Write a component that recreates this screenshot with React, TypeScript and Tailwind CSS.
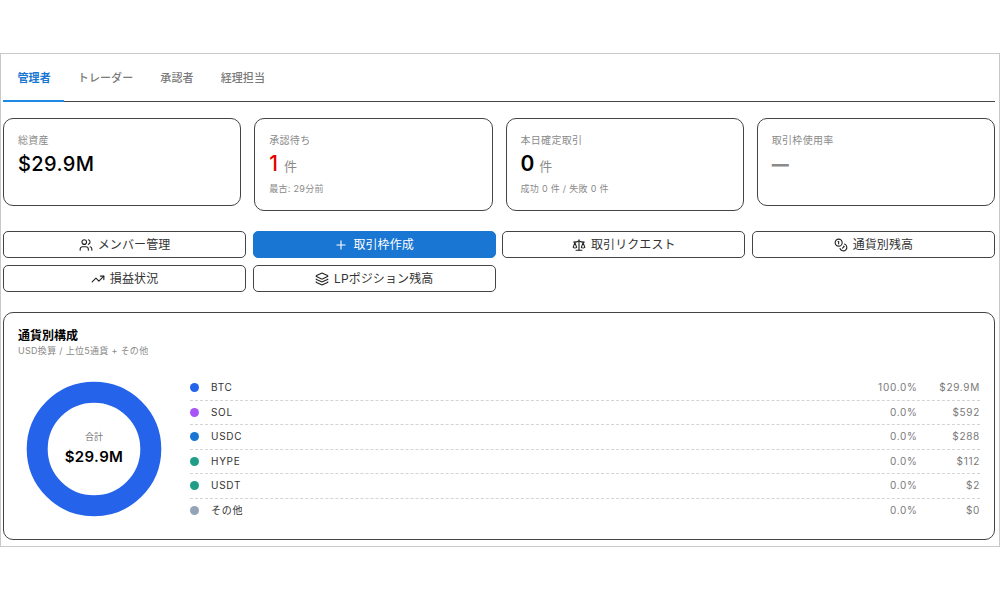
import React from "react";
import { Users, Plus, Scale, Coins, TrendingUp, Layers, LucideIcon } from "lucide-react";

const font = "font-['Inter','Noto_Sans_CJK_JP',sans-serif]";

const tabs = ["管理者", "トレーダー", "承認者", "経理担当"];

const actions: { label: string; icon: LucideIcon; primary?: boolean }[] = [
  { label: "メンバー管理", icon: Users },
  { label: "取引枠作成", icon: Plus, primary: true },
  { label: "取引リクエスト", icon: Scale },
  { label: "通貨別残高", icon: Coins },
  { label: "損益状況", icon: TrendingUp },
  { label: "LPポジション残高", icon: Layers },
];

const rows = [
  { name: "BTC", color: "bg-[#2563eb]", pct: "100.0%", amount: "$29.9M" },
  { name: "SOL", color: "bg-[#a855f7]", pct: "0.0%", amount: "$592" },
  { name: "USDC", color: "bg-[#1976d2]", pct: "0.0%", amount: "$288" },
  { name: "HYPE", color: "bg-[#1f9d87]", pct: "0.0%", amount: "$112" },
  { name: "USDT", color: "bg-[#1f9d87]", pct: "0.0%", amount: "$2" },
  { name: "その他", color: "bg-[#94a3b8]", pct: "0.0%", amount: "$0" },
];

const Card: React.FC<{ title: string; children: React.ReactNode; className?: string }> = ({ title, children, className }) => (
  <div className={`rounded-[10px] border border-[#444] bg-white px-[14px] pt-[15px] ${className}`}>
    <p className="text-[10px] leading-[13px] tracking-[0.3px] text-[#8a8a8a]">{title}</p>
    {children}
  </div>
);

export default function App() {
  return (
    <div className={`${font} h-[600px] bg-white pt-[53px]`}>
      <div className="h-[494px] border border-[#c9c9c9] pl-[2px] pr-[4px]">
        <div className="flex h-[48px] border-b border-[#444]">
          {tabs.map((t, i) => (
            <div
              key={t}
              className={`relative flex items-center pt-[2px] text-[11px] tracking-[0.1px] ${
                i === 0 ? "pl-[14.5px] pr-[13.5px] font-semibold text-[#1976d2]" : "px-[13.5px] font-medium text-[#7a7a7a]"
              }`}
            >
              {t}
              {i === 0 && <span className="absolute inset-x-0 -bottom-px h-[2px] bg-[#1e88e5]" />}
            </div>
          ))}
        </div>

        <div className="mt-[16px] grid grid-cols-4 items-start gap-x-[13px]">
          <Card title="総資産" className="h-[88px]">
            <p className="mt-[2px] text-[20px] font-medium leading-[30px] tracking-[0.4px] text-black">$29.9M</p>
          </Card>
          <Card title="承認待ち" className="h-[93px]">
            <p className="mt-[2px] flex items-baseline gap-[6px] leading-[30px]">
              <span className="text-[21px] font-medium text-[#e30000]">1</span>
              <span className="text-[13px] text-[#8a8a8a]">件</span>
            </p>
            <p className="mt-[2px] text-[9px] leading-[12px] tracking-[0.3px] text-[#8a8a8a]">最古: 29分前</p>
          </Card>
          <Card title="本日確定取引" className="h-[93px]">
            <p className="mt-[2px] flex items-baseline gap-[5px] leading-[30px]">
              <span className="text-[21px] font-semibold text-black">0</span>
              <span className="text-[13px] text-[#8a8a8a]">件</span>
            </p>
            <p className="mt-[2px] text-[9px] leading-[12px] tracking-[0.3px] text-[#8a8a8a]">成功 0 件 / 失敗 0 件</p>
          </Card>
          <Card title="取引枠使用率" className="h-[88px]">
            <p className="mt-[2px] text-[17px] font-black leading-[30px] text-[#8a8a8a]">—</p>
          </Card>
        </div>

        <div className="mt-[20px] grid grid-cols-4 gap-x-[6.5px] gap-y-[7px]">
          {actions.map(({ label, icon: Icon, primary }) => (
            <button
              key={label}
              className={`flex h-[27px] items-center justify-center gap-[5px] rounded-[5px] border text-[12px] tracking-[0.1px] ${
                primary ? "border-[#1976d2] bg-[#1976d2] text-white" : "border-[#444] bg-white text-[#333]"
              }`}
            >
              <Icon size={14} strokeWidth={1.9} className={primary ? "text-white" : "text-[#222]"} />
              {label}
            </button>
          ))}
        </div>

        <div className="mt-[20px] h-[228px] rounded-[10px] border border-[#444] px-[14px] pt-[15px]">
          <p className="text-[12px] font-semibold leading-[16px] text-black">通貨別構成</p>
          <p className="text-[9px] leading-[14px] tracking-[0.3px] text-[#8a8a8a]">USD換算 / 上位5通貨 + その他</p>
          <div className="mt-[18px] flex items-center">
            <div className="relative mb-[2px] ml-[8px] h-[136px] w-[136px] shrink-0">
              <svg viewBox="0 0 136 136" className="h-full w-full">
                <circle cx="68" cy="68" r="56.8" fill="none" stroke="#2563eb" strokeWidth="21" />
              </svg>
              <div className="absolute inset-0 flex flex-col items-center justify-center">
                <span className="text-[9px] leading-[12px] text-[#777]">合計</span>
                <span className="mt-[4px] text-[15px] font-semibold leading-[20px] tracking-[0.4px] text-black">$29.9M</span>
              </div>
            </div>
            <div className="ml-[28px] flex-1">
              {rows.map((r, i) => (
                <div
                  key={r.name}
                  className={`flex h-[24.5px] items-center text-[10px] tracking-[0.7px] ${
                    i < rows.length - 1 ? "border-b border-dashed border-[#d4d4d4]" : ""
                  }`}
                >
                  <span className={`h-[9px] w-[9px] rounded-full ${r.color}`} />
                  <span className="ml-[12px] flex-1 text-[#333]">{r.name}</span>
                  <span className="text-[#7a7a7a]">{r.pct}</span>
                  <span className="w-[62.5px] text-right text-[#7a7a7a]">{r.amount}</span>
                </div>
              ))}
            </div>
          </div>
        </div>
      </div>
    </div>
  );
}
